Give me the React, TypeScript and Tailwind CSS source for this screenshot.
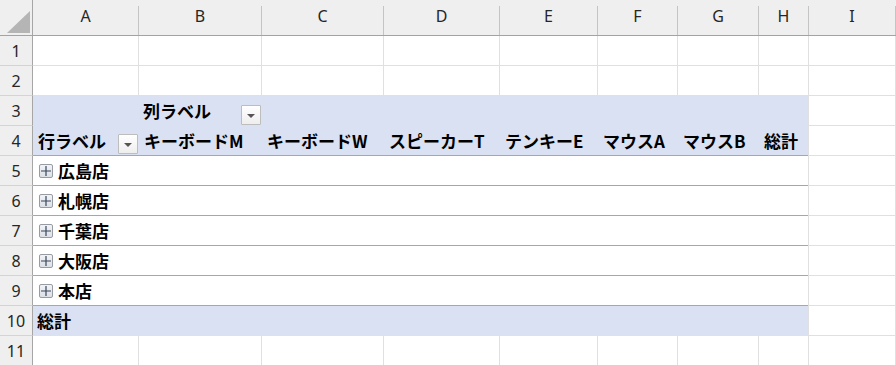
import React from "react";

const cols = ["A", "B", "C", "D", "E", "F", "G", "H", "I"];
const colWidths = ["w-[106px]", "w-[123px]", "w-[122px]", "w-[116px]", "w-[98px]", "w-[80px]", "w-[81px]", "w-[50px]", "w-[87px]"];
const products = ["キーボードM", "キーボードW", "スピーカーT", "テンキーE", "マウスA", "マウスB", "総計"];
const stores = ["広島店", "札幌店", "千葉店", "大阪店", "本店"];

const jp = "font-['Noto_Sans_CJK_JP','Noto_Sans',sans-serif] font-bold text-[17px] leading-[20px] text-black";

function DropButton() {
  return (
    <div className="flex h-[20px] w-[20px] shrink-0 items-center justify-center rounded-[1px] border border-[#bdbdbd] bg-gradient-to-b from-[#ffffff] to-[#eeeeee]">
      <svg width="8" height="5" viewBox="0 0 8 5" className="mt-[3px]">
        <path d="M0 0H8L4 4Z" fill="#555" />
      </svg>
    </div>
  );
}

function ExpandBox() {
  return (
    <div className="flex h-[14px] w-[14px] shrink-0 items-center justify-center rounded-[2px] border border-[#969ba4] bg-gradient-to-b from-[#f1f3f6] to-[#dce0e7]">
      <svg width="10" height="10" viewBox="0 0 10 10">
        <path d="M5 0V10M0 5H10" stroke="#3a465a" strokeWidth="1.2" />
      </svg>
    </div>
  );
}

function RowHead({ n }: { n: number }) {
  return (
    <div className="flex h-[30px] w-[33px] shrink-0 items-center justify-center border-b border-r border-b-[#d4d4d4] border-r-[#a6a6a6] bg-[#efefef] font-['Noto_Sans',sans-serif] text-[16px] text-[#262626]">
      {n}
    </div>
  );
}

function PlainRow({ n }: { n: number }) {
  return (
    <div className="flex">
      <RowHead n={n} />
      {colWidths.map((w, i) => (
        <div key={i} className={`${w} h-[30px] shrink-0 border-b border-r border-[#e0e0e0]`} />
      ))}
    </div>
  );
}

// one pivot row spans A..H; `line` is the bottom rule colour
function PivotRow({ n, tone, line, children }: { n: number; tone: string; line: string; children: React.ReactNode }) {
  return (
    <div className="flex">
      <RowHead n={n} />
      <div className={`flex h-[30px] w-[776px] shrink-0 border-r border-r-[#e0e0e0] ${tone}`}>
        <div className={`flex h-full w-full border-b ${line}`}>{children}</div>
      </div>
      <div className="h-[30px] w-[87px] shrink-0 border-b border-r border-[#e0e0e0]" />
    </div>
  );
}

export default function App() {
  return (
    <div className="h-[365px] w-[896px] overflow-hidden bg-white">
      {/* Column header */}
      <div className="flex h-[36px] border-b border-[#a3a3a3] bg-[#efefef]">
        <div className="flex h-full w-[33px] shrink-0 items-end justify-end border-r border-[#a6a6a6] pb-[2px] pr-[2px]">
          <svg width="23" height="22" viewBox="0 0 23 22">
            <path d="M23 0V22H0Z" fill="#b5b5b5" />
          </svg>
        </div>
        {cols.map((c, i) => (
          <div key={c} className={`${colWidths[i]} flex h-full shrink-0 items-end`}>
            <div className="flex h-[29px] w-full justify-center border-r border-[#c4c4c4] font-['Noto_Sans',sans-serif] text-[16px] leading-[21px] text-[#262626]">
              {c}
            </div>
          </div>
        ))}
      </div>

      <PlainRow n={1} />
      <PlainRow n={2} />

      {/* Pivot: column labels */}
      <PivotRow n={3} tone="bg-[#d9e1f2]" line="border-[#d9e1f2]">
        <div className="w-[106px] shrink-0" />
        <div className={`flex w-[123px] shrink-0 items-center justify-between pl-[4px] pr-[1px] ${jp}`}>
          <span>列ラベル</span>
          <div className="mt-[9px]">
            <DropButton />
          </div>
        </div>
      </PivotRow>

      <PivotRow n={4} tone="bg-[#d9e1f2]" line="border-[#8ea9db]">
        <div className={`flex w-[106px] shrink-0 items-center justify-between pl-[5px] pr-[1px] ${jp}`}>
          <span>行ラベル</span>
          <div className="mt-[6px]">
            <DropButton />
          </div>
        </div>
        {products.map((p, i) => (
          <div key={p} className={`${colWidths[i + 1]} flex shrink-0 items-center pl-[5px] ${jp}`}>
            {p}
          </div>
        ))}
      </PivotRow>

      {stores.map((s, i) => (
        <PivotRow key={s} n={5 + i} tone="bg-white" line="border-[#8ea9db]">
          <div className={`flex items-center gap-[5px] pl-[6px] ${jp}`}>
            <ExpandBox />
            <span>{s}</span>
          </div>
        </PivotRow>
      ))}

      <PivotRow n={10} tone="bg-[#d9e1f2]" line="border-[#d9e1f2]">
        <div className={`flex items-center pl-[4px] ${jp}`}>総計</div>
      </PivotRow>

      <PlainRow n={11} />
    </div>
  );
}
